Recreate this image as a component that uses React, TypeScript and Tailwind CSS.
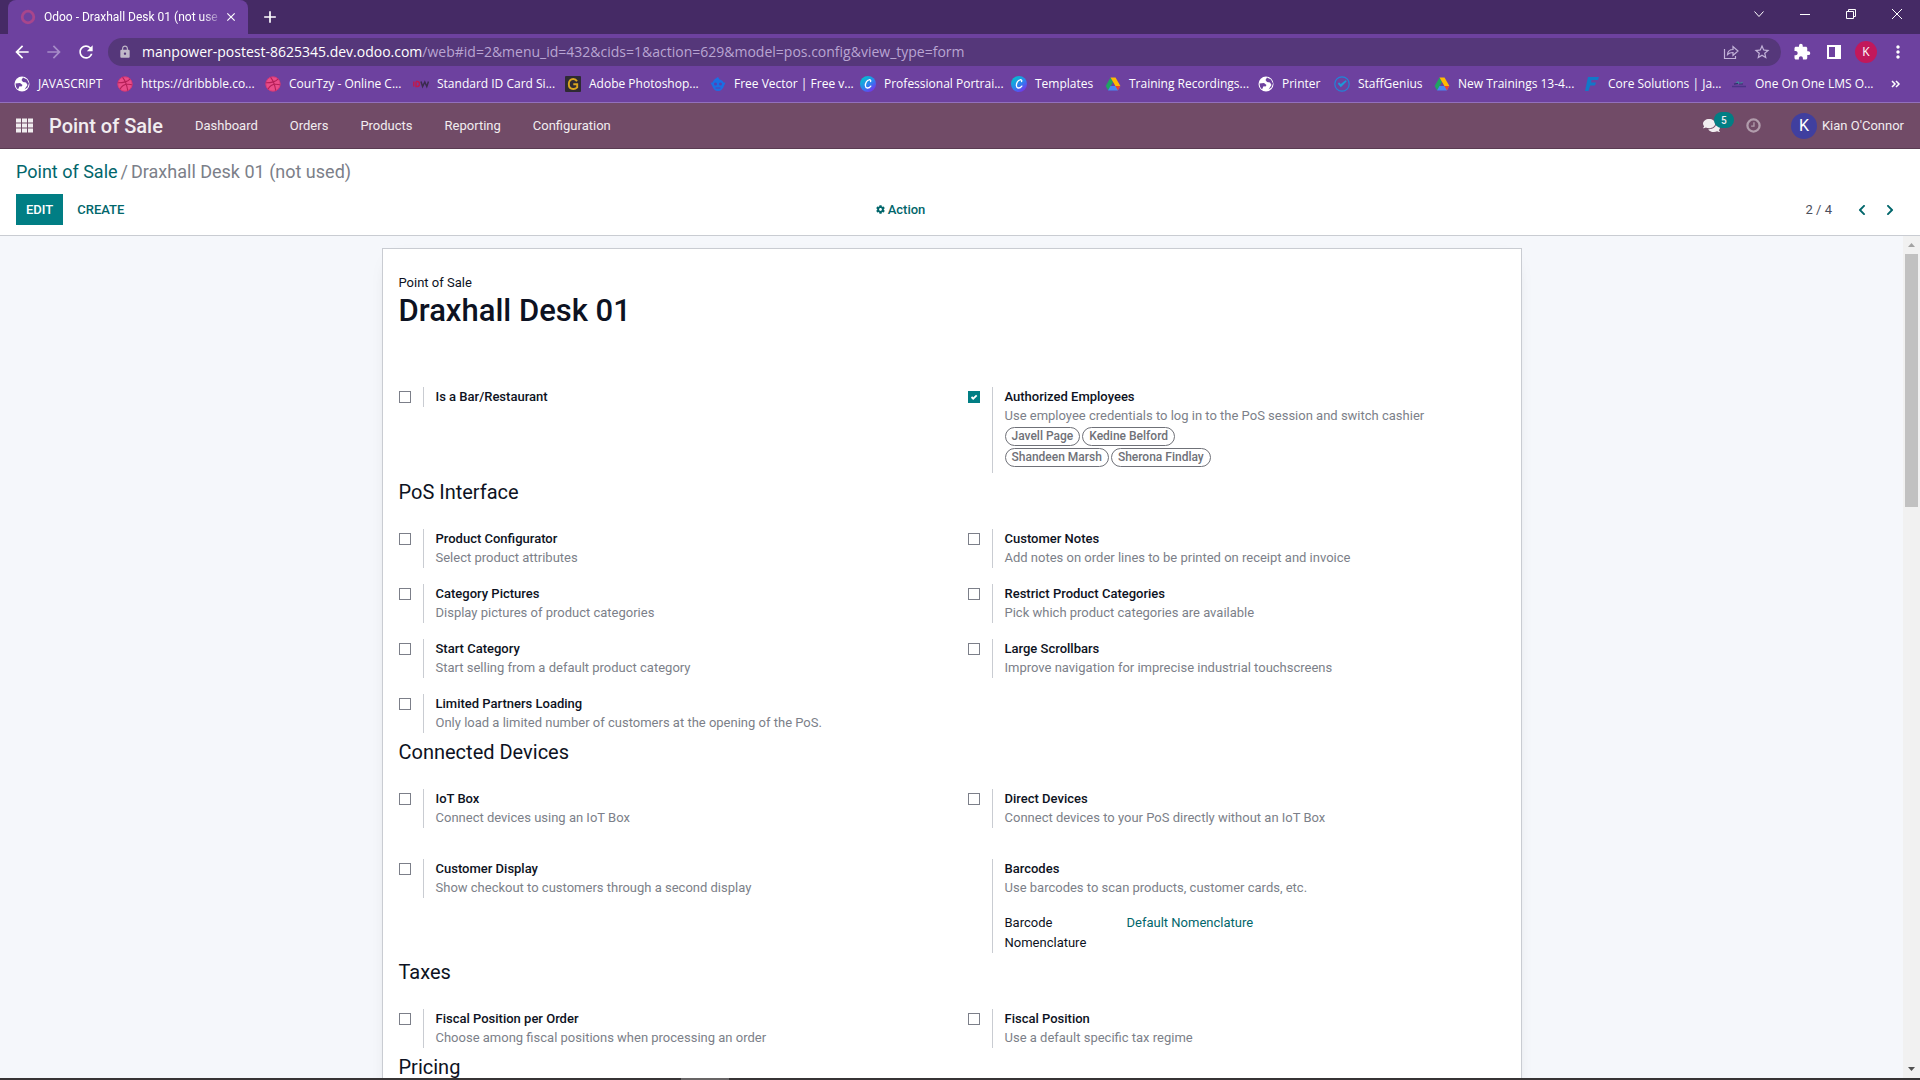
import React from "react";
import { MdArrowBack, MdArrowForward, MdExtension, MdLock, MdMoreVert, MdRefresh, MdStarBorder, MdAdd, MdClose } from "react-icons/md";
import { FaChevronLeft, FaChevronRight, FaCog, FaComments } from "react-icons/fa";

const Globe = () => (
  <svg viewBox="0 0 16 16" className="size-4">
    <circle cx="8" cy="8" r="7.5" fill="#fff" />
    <path d="M1.5 7.5 6 7l2.500 2-1 1.500-2-.2L4 13.500A8 8 0 0 1 1.500 7.500ZM9 1.500 7.500 4l1.500 2 3 .5 1.500 2.500-3 4.500 3-2 1.500-4-2-4Z" fill="#6d419f" />
  </svg>
);
const Dribbble = () => (
  <svg viewBox="0 0 16 16" className="size-4">
    <circle cx="8" cy="8" r="7.5" fill="#ea4c89" />
    <path d="M5.500 1.200C8.500 5 10 9.500 10.800 14.800M.8 6.800C6 6.800 10.500 6 13.200 2.800M3 13.200C5 9 9.500 7.300 15.200 8.800" fill="none" stroke="#b51f57" strokeWidth="1.100" />
    <circle cx="8" cy="8" r="7.200" fill="none" stroke="#c9306b" strokeWidth=".7" />
  </svg>
);
const Idw = () => (
  <svg viewBox="0 0 16 16" className="size-4">
    <path d="M.8 5.500v5M3 5.500v5h1.200c1.700 0 2.300-1 2.300-2.500s-.6-2.500-2.300-2.500H3" fill="none" stroke="#c2184b" strokeWidth="1.400" />
    <path d="m8 5.500 1.600 5L11.800 6l2 4.500 1.700-5" fill="none" stroke="#3a2b4d" strokeWidth="1.500" />
  </svg>
);
const GBadge = () => (
  <svg viewBox="0 0 16 16" className="size-4">
    <rect width="16" height="16" rx="1" fill="#2e2a33" />
    <path d="M12 5.200C11 3.500 9.800 3 8.300 3 5.500 3 3.800 5.100 3.800 8s1.700 5 4.500 5c1.600 0 3-.7 3.900-1.600V8.300H8.300" fill="none" stroke="#d9a520" strokeWidth="1.900" />
  </svg>
);
const Freepik = () => (
  <svg viewBox="0 0 16 16" className="size-4">
    <path d="M5 3 8 1l1.500 2.500C12 4 13 5 13.500 6.500l2 .2-1.500 3c-.8 3-3 5.300-6 5.300s-5-2.300-5.800-5.300L.5 6.700l2-.2C3 5 3.800 4.200 5 3Z" fill="#1b6fe3" />
    <circle cx="5.500" cy="8" r="1.500" fill="#5a3fb0" /><circle cx="10.500" cy="8" r="1.500" fill="#5a3fb0" />
    <path d="M5.500 12h5" stroke="#5a3fb0" />
  </svg>
);
const Canva = () => (
  <svg viewBox="0 0 16 16" className="size-4">
    <defs>
      <linearGradient id="canva" x1="0" y1="0" x2=".8" y2="1">
        <stop offset=".1" stopColor="#00c4cc" /><stop offset=".6" stopColor="#2f7ff0" /><stop offset="1" stopColor="#7d2ae8" />
      </linearGradient>
    </defs>
    <circle cx="8" cy="8" r="8" fill="url(#canva)" />
    <path d="M10.600 5.600c.6-1.300-.4-2.100-1.500-1.800C7 4.300 5.200 7 5.400 9.700c.2 2.800 3.300 3.200 5.400.4" fill="none" stroke="#fff" strokeWidth="1.300" strokeLinecap="round" />
  </svg>
);
const Drive = () => (
  <svg viewBox="0 0 16 16" className="size-4">
    <path d="M5.500 1.500 8 6 3.200 14.500.7 10Z" fill="#1fa463" />
    <path d="M5.500 1.500h5L15.400 10h-5Z" fill="#ffba00" />
    <path d="M5.500 10h9.900l-2.500 4.500H3Z" fill="#4688f4" />
    <path d="m10.400 10h5l-2.500 4.500Z" fill="#ea4335" />
  </svg>
);
const StaffGenius = () => (
  <svg viewBox="0 0 16 16" className="size-4">
    <circle cx="8" cy="8" r="7.200" fill="none" stroke="#1f86d8" strokeWidth="1.200" />
    <path d="m3.800 7.800 3 3.400L12.800 5.300l-1.300-1-4.700 3.600L5 6.300Z" fill="#1c9ad8" />
  </svg>
);
const FLogo = () => (
  <svg viewBox="0 0 16 16" className="size-4">
    <path d="M4 1h11l-1 3H7.500L7 6.500h5L11 9.500H6.200L4.500 15H1Z" fill="#1278c8" />
  </svg>
);
const Lms = () => (
  <svg viewBox="0 0 16 16" className="size-4">
    <path d="M4 7.500 7 5l1.500 2 4-1.500-2.500 2.500Z" fill="#3f8f9a" />
    <path d="m3 8.200 4-.8M8 8h4" stroke="#35306f" strokeWidth="1.200" />
    <path d="M1 10.500h14" stroke="#4b3286" strokeWidth="1.500" />
  </svg>
);
const Share = () => (
  <svg viewBox="0 0 16 16" className="size-4" fill="none" stroke="#c3b3d9" strokeWidth="1.200">
    <path d="M1.500 5v9.500h11V12M4.500 10.500c.3-3.700 2.400-5 5.500-5V2.500l5 4.500-5 4.500V8.500c-2.500 0-4 .4-5.500 2Z" />
  </svg>
);
const Clock = () => (
  <svg viewBox="0 0 16 16" className="size-[15px]" fill="none" stroke="currentColor">
    <circle cx="8" cy="8" r="6.500" strokeWidth="2.400" />
    <path d="M8.500 4.500v4.200H5.500" strokeWidth="1.400" />
  </svg>
);

const bookmarks = [
  { label: "JAVASCRIPT", icon: Globe, w: "w-[103px]" },
  { label: "https://dribbble.co...", icon: Dribbble, w: "w-[148px]" },
  { label: "CourTzy - Online C...", icon: Dribbble, w: "w-[148px]" },
  { label: "Standard ID Card Si...", icon: Idw, w: "w-[152px]" },
  { label: "Adobe Photoshop...", icon: GBadge, w: "w-[145px]" },
  { label: "Free Vector | Free v...", icon: Freepik, w: "w-[150px]" },
  { label: "Professional Portrai...", icon: Canva, w: "w-[151px]" },
  { label: "Templates", icon: Canva, w: "w-[94px]" },
  { label: "Training Recordings...", icon: Drive, w: "w-[153px]" },
  { label: "Printer", icon: Globe, w: "w-[76px]" },
  { label: "StaffGenius", icon: StaffGenius, w: "w-[100px]" },
  { label: "New Trainings 13-4...", icon: Drive, w: "w-[150px]" },
  { label: "Core Solutions | Ja...", icon: FLogo, w: "w-[147px]" },
  { label: "One On One LMS O...", icon: Lms, w: "w-[148px]" },
];

function Browser() {
  return (
    <header className="shrink-0 bg-[#6d419f] font-['Open_Sans','Noto_Sans',sans-serif] text-xs text-white">
      <div className="flex h-[34px] items-stretch bg-[#452a65] pl-2">
        <div className="flex w-[240px] items-center rounded-t-lg bg-[#6d419f] pr-2.5 pl-3">
          <svg viewBox="0 0 16 16" className="size-4 shrink-0"><circle cx="8" cy="8" r="5.800" fill="none" stroke="#a8468c" strokeWidth="2.800" /></svg>
          <span className="ml-2 flex-1 whitespace-nowrap font-[Roboto,sans-serif] [mask-image:linear-gradient(to_right,#000_88%,transparent)]">Odoo - Draxhall Desk 01 (not use</span>
          <button aria-label="Close tab"><MdClose className="size-3.5" /></button>
        </div>
        <button aria-label="New tab" className="ml-3"><MdAdd className="size-5" /></button>
        <div className="ml-auto flex h-7 items-center pr-[17px]">
          <button aria-label="Search tabs" className="w-[46px]"><svg viewBox="0 0 12 12" className="size-3" fill="none" stroke="#fff"><path d="m1.500 3.500 4.500 5 4.500-5" /></svg></button>
          <button aria-label="Minimize" className="w-[46px]"><svg viewBox="0 0 12 12" className="size-3" stroke="#fff"><path d="M1 6.500h10" /></svg></button>
          <button aria-label="Restore" className="w-[46px]"><svg viewBox="0 0 12 12" className="size-3" fill="none" stroke="#fff"><path d="M1.500 3.500h7v7h-7zM3.500 3.500v-2h7v7h-2" /></svg></button>
          <button aria-label="Close"><svg viewBox="0 0 12 12" className="size-3" stroke="#fff"><path d="m1 1 10 10M11 1 1 11" /></svg></button>
        </div>
      </div>
      <div className="flex h-9 items-center px-3">
        <button aria-label="Back" className="w-8"><MdArrowBack className="size-5" /></button>
        <button aria-label="Forward" className="w-8 text-[#a78cc8]"><MdArrowForward className="size-5" /></button>
        <button aria-label="Reload" className="w-8"><MdRefresh className="size-5" /></button>
        <div className="flex h-7 flex-1 items-center rounded-full bg-[#55377a] px-2.5">
          <MdLock className="size-3.5 text-[#c0b8c8]" />
          <p className="ml-2.5 flex-1 text-sm text-[#b9a5d2]"><span className="text-white">manpower-postest-8625345.dev.odoo.com</span>/web#id=2&amp;menu_id=432&amp;cids=1&amp;action=629&amp;model=pos.config&amp;view_type=form</p>
          <button aria-label="Share this page"><Share /></button>
          <button aria-label="Bookmark this page" className="ml-3.5 text-[#c3b3d9]"><MdStarBorder className="size-[18px]" /></button>
        </div>
        <button aria-label="Extensions" className="ml-3"><MdExtension className="size-[18px]" /></button>
        <button aria-label="Side panel" className="ml-4"><svg viewBox="0 0 14 14" className="size-3.5"><path d="M0 0h14v14H0zM2 2v10h6V2z" fill="#fff" fillRule="evenodd" /></svg></button>
        <button className="ml-3.5 flex size-[22px] items-center justify-center rounded-full bg-[#c2185b] text-xs">K</button>
        <button aria-label="Menu" className="ml-[11px]"><MdMoreVert className="size-5" /></button>
      </div>
      <nav aria-label="Bookmarks" className="flex h-[33px] items-center border-b border-[#9270bd] pb-1 pl-3.5">
        {bookmarks.map((b) => (
          <a key={b.label} href="#" className={`flex shrink-0 items-center gap-2 whitespace-nowrap ${b.w}`}>
            <span className="shrink-0"><b.icon /></span>
            {b.label}
          </a>
        ))}
        <button aria-label="More bookmarks" className="ml-3"><svg viewBox="0 0 10 8" className="h-2 w-2.5" fill="none" stroke="#fff" strokeWidth="1.500"><path d="m1 1 3 3-3 3M5 1l3 3-3 3" /></svg></button>
      </nav>
    </header>
  );
}

function Navbar() {
  return (
    <nav className="flex h-[46px] shrink-0 items-center border-b border-[#5a3b52] bg-[#714b67] px-4 text-[#f1edf0]">
      <button aria-label="Home menu">
        <svg viewBox="0 0 17 15" className="h-[15px] w-[17px]" fill="currentColor">
          {[0, 6, 12].map((x) => [0, 5, 10].map((y) => <rect key={`${x}-${y}`} x={x} y={y + 0.5} width="5" height="4" />))}
        </svg>
      </button>
      <a href="#" className="ml-4 text-xl font-medium">Point of Sale</a>
      <div className="ml-4 flex">
        {["Dashboard", "Orders", "Products", "Reporting", "Configuration"].map((m) => (
          <button key={m} className="px-4">{m}</button>
        ))}
      </div>
      <button aria-label="Messages" className="relative ml-auto">
        <FaComments className="size-[17px]" />
        <span className="absolute -top-[5px] left-[11px] flex h-4 w-5 items-center justify-center rounded-full bg-[#017e84] text-[10px] font-medium">5</span>
      </button>
      <button aria-label="Activities" className="ml-[26px] opacity-50"><Clock /></button>
      <button className="ml-[30px] flex items-center gap-[5px]">
        <span className="flex size-[26px] items-center justify-center rounded-full bg-[#403f9f] text-base text-white">K</span>
        Kian O'Connor
      </button>
    </nav>
  );
}

function ControlPanel() {
  return (
    <section className="h-[87px] shrink-0 border-b border-[#c9ccd2] bg-white px-4 pt-2.5">
      <div className="flex h-[25px] gap-[3px] text-lg leading-[25px] text-[#7c7f89]">
        <a href="#" className="text-[#01666b]">Point of Sale</a>
        <span>/</span>
        <span>Draxhall Desk 01 (not used)</span>
      </div>
      <div className="mt-2.5 grid h-[31px] grid-cols-[1fr_auto_1fr] items-center font-medium text-[#01666b]">
        <div className="flex h-full">
          <button className="bg-[#017e84] px-2.5 text-white">EDIT</button>
          <button className="px-3.5">CREATE</button>
        </div>
        <button className="mr-[119px] flex items-center gap-[3px]"><FaCog className="size-[9px]" />Action</button>
        <div className="flex items-center justify-end pr-[9px]">
          <span className="mr-[25px] font-normal text-[#4c4f5c]">2 / 4</span>
          <button aria-label="Previous"><FaChevronLeft className="h-3 w-2.5" /></button>
          <button aria-label="Next" className="ml-[18px]"><FaChevronRight className="h-3 w-2.5" /></button>
        </div>
      </div>
    </section>
  );
}

type SettingProps = { title: string; desc?: string; checked?: boolean; noBox?: boolean; tall?: boolean; children?: React.ReactNode };

function Setting({ title, desc, checked, noBox, tall, children }: SettingProps) {
  const id = title.toLowerCase().replace(/[^a-z]+/g, "-");
  return (
    <div className={tall ? "flex items-start pb-[15px]" : "flex items-start"}>
      <div className="flex w-6 shrink-0 pt-1">
        {!noBox && (
          <span className="relative flex size-3">
            <input id={id} type="checkbox" defaultChecked={checked} className="peer size-3 appearance-none border border-[#7c7f89] bg-white checked:border-[#017e84] checked:bg-[#017e84]" />
            <svg viewBox="0 0 12 12" className="pointer-events-none absolute inset-0 hidden size-3 peer-checked:block" fill="none" stroke="#fff" strokeWidth="1.800"><path d="m3.500 6 1.700 1.700L8.700 4.300" /></svg>
          </span>
        )}
      </div>
      <div className="border-l border-[#c9ccd2] pl-3">
        {noBox ? <h3 className="leading-5 font-medium">{title}</h3> : <label htmlFor={id} className="block leading-5 font-medium">{title}</label>}
        {desc && <p className="pb-px leading-[18px] text-[#7c7f89]">{desc}</p>}
        {children}
      </div>
    </div>
  );
}

const Heading = ({ children }: { children: string }) => <h2 className="pt-[7px] pb-[25px] text-xl leading-6">{children}</h2>;
const Group = ({ children }: { children: React.ReactNode }) => <div className="grid grid-cols-2 items-start gap-y-4">{children}</div>;
const Tag = ({ children }: { children: string }) => (
  <span className="h-[19px] rounded-full border border-[#6f7178] px-1.5 text-xs leading-[17px] font-medium text-[#6f7178]">{children}</span>
);

function Sheet() {
  return (
    <article className="mx-auto max-w-[1140px] border border-[#c9ccd2] bg-white pt-6 pb-4 text-[#0d1222] shadow-[0_5px_20px_-15px_rgba(0,0,0,0.4)]">
      <div className="-mr-4 ml-4">
        <p className="leading-5">Point of Sale</p>
        <h1 className="mb-[58px] text-[31px] leading-9 font-medium">Draxhall Desk 01</h1>
        <Group>
          <Setting title="Is a Bar/Restaurant" />
          <Setting title="Authorized Employees" desc="Use employee credentials to log in to the PoS session and switch cashier" checked>
            <div className="flex w-[220px] flex-wrap gap-0.5 pt-px pb-1.5">
              <Tag>Javell Page</Tag>
              <Tag>Kedine Belford</Tag>
              <Tag>Shandeen Marsh</Tag>
              <Tag>Sherona Findlay</Tag>
            </div>
          </Setting>
        </Group>
        <Heading>PoS Interface</Heading>
        <Group>
          <Setting title="Product Configurator" desc="Select product attributes" />
          <Setting title="Customer Notes" desc="Add notes on order lines to be printed on receipt and invoice" />
          <Setting title="Category Pictures" desc="Display pictures of product categories" />
          <Setting title="Restrict Product Categories" desc="Pick which product categories are available" />
          <Setting title="Start Category" desc="Start selling from a default product category" />
          <Setting title="Large Scrollbars" desc="Improve navigation for imprecise industrial touchscreens" />
          <Setting title="Limited Partners Loading" desc="Only load a limited number of customers at the opening of the PoS." />
        </Group>
        <Heading>Connected Devices</Heading>
        <Group>
          <Setting title="IoT Box" desc="Connect devices using an IoT Box" tall />
          <Setting title="Direct Devices" desc="Connect devices to your PoS directly without an IoT Box" />
          <Setting title="Customer Display" desc="Show checkout to customers through a second display" />
          <Setting title="Barcodes" desc="Use barcodes to scan products, customer cards, etc." noBox>
            <dl className="flex pt-[15px] leading-5">
              <dt className="w-[122px] pr-8">Barcode Nomenclature</dt>
              <dd><a href="#" className="text-[#01666b]">Default Nomenclature</a></dd>
            </dl>
          </Setting>
        </Group>
        <Heading>Taxes</Heading>
        <Group>
          <Setting title="Fiscal Position per Order" desc="Choose among fiscal positions when processing an order" />
          <Setting title="Fiscal Position" desc="Use a default specific tax regime" />
        </Group>
        <Heading>Pricing</Heading>
      </div>
    </article>
  );
}

export default function App() {
  return (
    <div className="flex h-screen flex-col overflow-hidden bg-white font-[Roboto,sans-serif] text-[13px]">
      <Browser />
      <Navbar />
      <ControlPanel />
      <div className="flex min-h-0 flex-1">
        <main className="flex-1 overflow-hidden bg-[#f5f7fb] pt-3">
          <Sheet />
        </main>
        <div aria-hidden="true" className="flex w-[17px] flex-col items-center bg-[#f1f1f1]">
          <svg viewBox="0 0 7 4" className="my-[7px] h-1 w-[7px] shrink-0"><path d="M0 4 3.500 0 7 4Z" fill="#a3a3a3" /></svg>
          <div className="h-[30%] w-[13px] bg-[#c1c1c1]" />
          <svg viewBox="0 0 7 4" className="mt-auto mb-[7px] h-1 w-[7px] shrink-0"><path d="m0 0 3.500 4L7 0Z" fill="#505050" /></svg>
        </div>
      </div>
      <footer className="flex h-0.5 shrink-0 bg-[#373435]"><div className="ml-[681px] w-12 bg-[#686566]" /></footer>
    </div>
  );
}
